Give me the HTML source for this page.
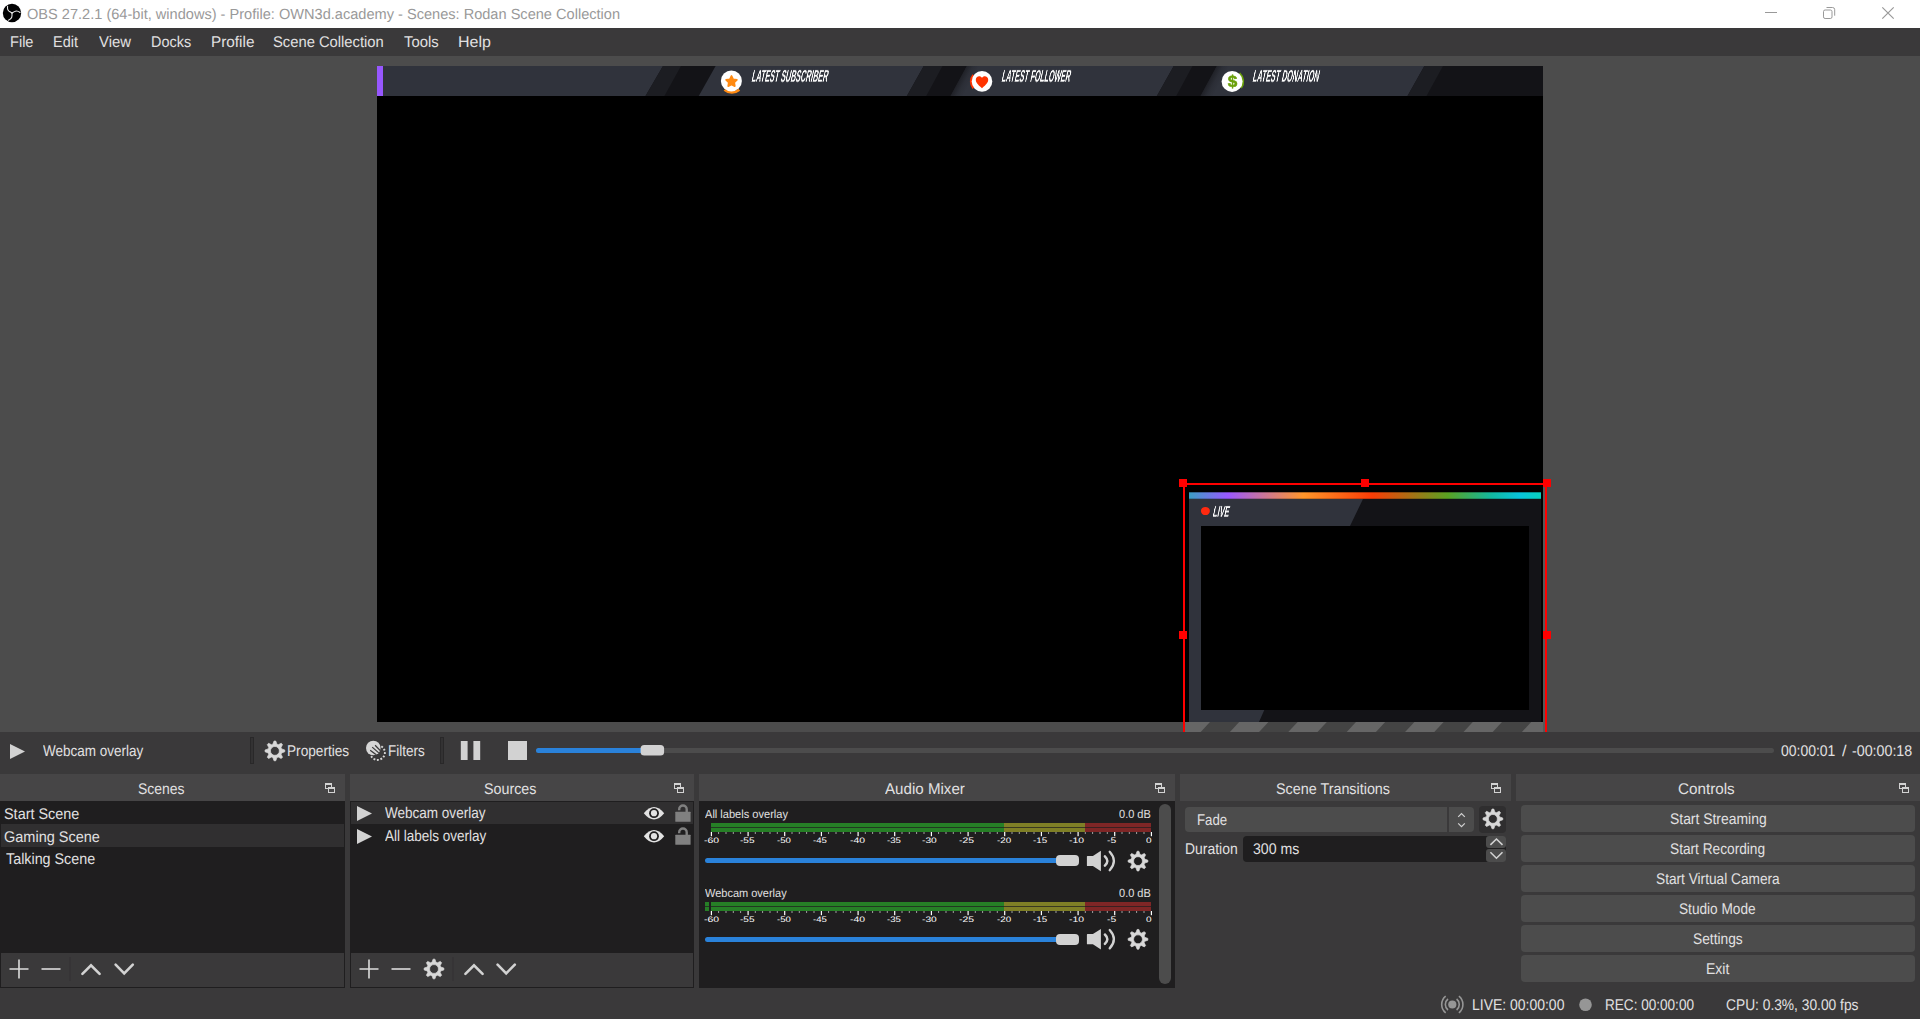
<!DOCTYPE html>
<html><head><meta charset="utf-8"><title>OBS</title>
<style>
html,body{margin:0;padding:0}
body{width:1920px;height:1019px;overflow:hidden;background:#3a393a;position:relative;font-family:"Liberation Sans",sans-serif;text-rendering:geometricPrecision}
.a{position:absolute}
.t{position:absolute;white-space:pre;line-height:20px;height:20px;transform-origin:0 0}
.o{font-weight:bold;color:#fff;transform-origin:0 75%;will-change:transform}
.btn{position:absolute;left:1521px;width:394px;height:27px;background:#4c4c4c;border-radius:4px}
.title{position:absolute;top:774px;height:27px;background:#464546}
.list{position:absolute;top:801px;background:#1f1e1f}
svg{position:absolute;left:0;top:0}
</style></head><body>
<div class="a" style="left:0;top:0;width:1920px;height:28px;background:#fff"></div>
<div class="a" style="left:0;top:28px;width:1920px;height:28px;background:#3a393a"></div>
<div class="a" style="left:0;top:56px;width:1920px;height:676px;background:#4c4c4c"></div>
<div class="a" style="left:377px;top:66px;width:1166px;height:656px;background:#000"></div>
<svg width="1920" height="1019" viewBox="0 0 1920 1019">
<rect x="377" y="66" width="1166" height="30" fill="#30333c"/>
<path d="M663 66L715.6 66L698.75 96L645.5 96Z" fill="#131317"/>
<path d="M663 66L681 66L664.4 96L645.5 96Z" fill="#1c1d22"/>
<path d="M923.75 66L966.9 66L950.6 96L906.9 96Z" fill="#131317"/>
<path d="M923.75 66L942.5 66L926.25 96L906.9 96Z" fill="#1c1d22"/>
<path d="M1173.75 66L1216.9 66L1200.6 96L1156.9 96Z" fill="#131317"/>
<path d="M1173.75 66L1192.5 66L1176.25 96L1156.9 96Z" fill="#1c1d22"/>
<defs><linearGradient id="gl0" gradientUnits="userSpaceOnUse" x1="958.75" y1="81" x2="968.45" y2="86.25"><stop offset="0" stop-color="#131317" stop-opacity="0.55"/><stop offset="0.5" stop-color="#131317" stop-opacity="0.16"/><stop offset="1" stop-color="#131317" stop-opacity="0"/></linearGradient></defs>
<path d="M966.9 66L950.6 96L964 96L980.3 66Z" fill="url(#gl0)"/>
<defs><linearGradient id="gl1" gradientUnits="userSpaceOnUse" x1="1208.75" y1="81" x2="1218.45" y2="86.25"><stop offset="0" stop-color="#131317" stop-opacity="0.55"/><stop offset="0.5" stop-color="#131317" stop-opacity="0.16"/><stop offset="1" stop-color="#131317" stop-opacity="0"/></linearGradient></defs>
<path d="M1216.9 66L1200.6 96L1214 96L1230.3 66Z" fill="url(#gl1)"/>
<path d="M1424.4 66L1543 66L1543 96L1407.5 96Z" fill="#131317"/>
<path d="M1424.4 66L1443 66L1426.5 96L1407.5 96Z" fill="#1c1d22"/>
<rect x="377" y="66" width="6" height="30" fill="#9757ff"/>
<path d="M739.29 89.71A11.5 11.5 0 0 1 724.51 89.71" fill="none" stroke="#ff8a12" stroke-width="2.8"/>
<circle cx="731.4" cy="80.9" r="10.5" fill="#fff"/>
<path d="M731.50 75.90L733.20 79.25L736.92 79.84L734.26 82.50L734.85 86.21L731.50 84.50L728.15 86.21L728.74 82.50L726.08 79.84L729.80 79.25Z" fill="#ff8a12" stroke="#ff8a12" stroke-width="1.6" stroke-linejoin="round"/>
<path d="M973.41 88.31A10.9 10.9 0 0 1 973.41 74.89" fill="none" stroke="#ff3300" stroke-width="2.4"/>
<circle cx="982" cy="81.4" r="10.3" fill="#fff"/>
<path d="M982 88.2C977.6 84.6 975.8 82.4 975.8 79.8C975.8 77.6 977.4 76.2 979.2 76.2C980.4 76.2 981.4 76.8 982 77.8C982.6 76.8 983.6 76.2 984.8 76.2C986.6 76.2 988.2 77.6 988.2 79.8C988.2 82.4 986.4 84.6 982 88.2Z" fill="#ff3300"/>
<path d="M1239.46 73.23A11 11 0 0 1 1241.00 87.87" fill="none" stroke="#6aa00a" stroke-width="2.2"/>
<circle cx="1232.1" cy="81.4" r="10.5" fill="#fff"/>
<defs><linearGradient id="rb" x1="0" x2="1" y1="0" y2="0"><stop offset="0" stop-color="#3a9ec4"/><stop offset="0.11" stop-color="#9a58ff"/><stop offset="0.325" stop-color="#ff962a"/><stop offset="0.52" stop-color="#fa3c06"/><stop offset="0.735" stop-color="#5aa222"/><stop offset="0.86" stop-color="#12b8a0"/><stop offset="0.94" stop-color="#08c4dc"/><stop offset="1" stop-color="#08d0c0"/></linearGradient></defs>
<rect x="1189" y="499" width="352" height="223" fill="#131317"/>
<path d="M1189 499H1363L1350 526H1201V710H1264.3L1259 722H1189Z" fill="#30333c"/>
<rect x="1201" y="526" width="328" height="184" fill="#000"/>
<rect x="1189" y="492.3" width="352" height="6.5" fill="url(#rb)"/>
<ellipse cx="1205.4" cy="511" rx="4.5" ry="4.1" fill="#ff2a10"/>
<clipPath id="hc"><rect x="1185" y="722" width="360" height="10"/></clipPath><g clip-path="url(#hc)"><rect x="1185" y="722" width="360" height="10" fill="#444444"/>
<path d="M1180.8 722L1210.0 722L1200.7 732L1171.5 732Z" fill="#666666"/>
<path d="M1239.2 722L1268.4 722L1259.1 732L1229.9 732Z" fill="#666666"/>
<path d="M1297.6 722L1326.8 722L1317.5 732L1288.3 732Z" fill="#666666"/>
<path d="M1356.0 722L1385.2 722L1375.9 732L1346.7 732Z" fill="#666666"/>
<path d="M1414.4 722L1443.6 722L1434.3 732L1405.1 732Z" fill="#666666"/>
<path d="M1472.8 722L1502.0 722L1492.7 732L1463.5 732Z" fill="#666666"/>
<path d="M1531.2 722L1560.4 722L1551.1 732L1521.9 732Z" fill="#666666"/>
</g>
<rect x="1543" y="485" width="2" height="247" fill="#585858"/>
<path d="M1184 484H1546M1184 484V732M1546 484V732" stroke="#ff0000" stroke-width="2" fill="none"/>
<rect x="1179" y="479" width="8" height="8" fill="#ff0000"/>
<rect x="1361" y="479" width="8" height="8" fill="#ff0000"/>
<rect x="1543" y="479" width="8" height="8" fill="#ff0000"/>
<rect x="1179" y="631" width="8" height="8" fill="#ff0000"/>
<rect x="1543" y="631" width="8" height="8" fill="#ff0000"/>
</svg>
<!-- docks -->
<div class="title" style="left:0;width:345px"></div>
<div class="title" style="left:350px;width:344px"></div>
<div class="title" style="left:699px;width:476px"></div>
<div class="title" style="left:1180px;width:331px"></div>
<div class="title" style="left:1516px;width:404px"></div>
<div class="list" style="left:0;width:345px;height:187px"></div>
<div class="a" style="left:1px;top:953px;width:343px;height:34px;background:#3a393a"></div>
<div class="a" style="left:1px;top:824px;width:343px;height:23px;background:#302f30"></div>
<div class="list" style="left:350px;width:344px;height:187px"></div>
<div class="a" style="left:351px;top:953px;width:342px;height:34px;background:#3a393a"></div>
<div class="a" style="left:351px;top:802px;width:342px;height:22px;background:#302f30"></div>
<div class="list" style="left:699px;width:476px;height:187px"></div>
<div class="a" style="left:1185px;top:807px;width:289px;height:25px;background:#4c4c4c;border-radius:4px"></div>
<div class="a" style="left:1447px;top:807px;width:2px;height:25px;background:#3a393a"></div>
<div class="a" style="left:1479px;top:806px;width:27px;height:27px;background:#2f2e2f;border-radius:4px"></div>
<div class="a" style="left:1243px;top:836px;width:263px;height:26px;background:#1f1e1f;border-radius:4px"></div>
<div class="a" style="left:1486px;top:836px;width:20px;height:12px;background:#4c4c4c;border-radius:3px"></div>
<div class="a" style="left:1486px;top:849px;width:20px;height:13px;background:#4c4c4c;border-radius:3px"></div>
<div class="btn" style="top:805px"></div><div class="btn" style="top:835px"></div><div class="btn" style="top:865px"></div>
<div class="btn" style="top:895px"></div><div class="btn" style="top:925px"></div><div class="btn" style="top:955px"></div>
<svg width="1920" height="1019" viewBox="0 0 1920 1019">
<circle cx="12" cy="13" r="9.2" fill="#020203"/>
<path transform="rotate(0 12 13)" d="M12 13L9.6 11.6C8 10.6 7.1 9 7.6 6.3" stroke="#fff" stroke-width="1.1" fill="none" stroke-linecap="round" opacity="0.92"/>
<path transform="rotate(120 12 13)" d="M12 13L9.6 11.6C8 10.6 7.1 9 7.6 6.3" stroke="#fff" stroke-width="1.1" fill="none" stroke-linecap="round" opacity="0.92"/>
<path transform="rotate(240 12 13)" d="M12 13L9.6 11.6C8 10.6 7.1 9 7.6 6.3" stroke="#fff" stroke-width="1.1" fill="none" stroke-linecap="round" opacity="0.92"/>
<path d="M1765 12.5H1777" stroke="#999" stroke-width="1"/>
<rect x="1823.5" y="10" width="8.5" height="8.5" rx="1.6" fill="none" stroke="#999" stroke-width="1"/>
<path d="M1826.5 7.5H1832.5a2.2 2.2 0 0 1 2.2 2.2V15.7" fill="none" stroke="#999" stroke-width="1"/>
<path d="M1882.3 7.3L1893.7 18.7M1893.7 7.3L1882.3 18.7" stroke="#999" stroke-width="1.2"/>
<path d="M10 744L25 751.5L10 759Z" fill="#d2d2d2"/>
<rect x="250.5" y="737.5" width="3" height="26" fill="#333233" stroke="#292829" stroke-width="1"/><rect x="440.5" y="737.5" width="3" height="26" fill="#333233" stroke="#292829" stroke-width="1"/>
<path fill="#d8d8d8" stroke="#d8d8d8" stroke-width="0.7" stroke-linejoin="round" fill-rule="evenodd" d="M272.89 744.19 L274.01 741.04 L275.79 741.04 L276.91 744.19 L278.22 744.74 L281.24 743.30 L282.50 744.56 L281.06 747.58 L281.61 748.89 L284.76 750.01 L284.76 751.79 L281.61 752.91 L281.06 754.22 L282.50 757.24 L281.24 758.50 L278.22 757.06 L276.91 757.61 L275.79 760.76 L274.01 760.76 L272.89 757.61 L271.58 757.06 L268.56 758.50 L267.30 757.24 L268.74 754.22 L268.19 752.91 L265.04 751.79 L265.04 750.01 L268.19 748.89 L268.74 747.58 L267.30 744.56 L268.56 743.30 L271.58 744.74Z M270.45 750.90 a4.45 4.45 0 1 0 8.9 0 a4.45 4.45 0 1 0 -8.9 0Z"/>
<clipPath id="fc"><circle cx="373.3" cy="748" r="7.3"/></clipPath><circle cx="373.3" cy="748" r="7.3" fill="#d6d6d6"/>
<path clip-path="url(#fc)" d="M375.1 745.3L381 751.3M372.2 747.1L379.6 753.6M370.2 750.2L377.3 755.6" stroke="#3a393a" stroke-width="1.25"/>
<rect x="-0.95" y="-0.95" width="1.9" height="1.9" fill="#d6d6d6" transform="translate(382.09 746.85) rotate(-52)"/>
<rect x="-0.95" y="-0.95" width="1.9" height="1.9" fill="#d6d6d6" transform="translate(384.27 749.63) rotate(-24)"/>
<rect x="-0.95" y="-0.95" width="1.9" height="1.9" fill="#d6d6d6" transform="translate(384.88 753.11) rotate(4)"/>
<rect x="-0.95" y="-0.95" width="1.9" height="1.9" fill="#d6d6d6" transform="translate(383.79 756.47) rotate(32)"/>
<rect x="-0.95" y="-0.95" width="1.9" height="1.9" fill="#d6d6d6" transform="translate(381.25 758.92) rotate(60)"/>
<rect x="-0.95" y="-0.95" width="1.9" height="1.9" fill="#d6d6d6" transform="translate(377.85 759.90) rotate(88)"/>
<rect x="-0.95" y="-0.95" width="1.9" height="1.9" fill="#d6d6d6" transform="translate(374.40 759.16) rotate(116)"/>
<rect x="-0.95" y="-0.95" width="1.9" height="1.9" fill="#d6d6d6" transform="translate(371.69 756.89) rotate(144)"/>
<rect x="460.8" y="741" width="6.8" height="19" fill="#d2d2d2"/><rect x="473.4" y="741" width="6.8" height="19" fill="#d2d2d2"/>
<rect x="508" y="741" width="19" height="19" fill="#d2d2d2"/>
<rect x="536" y="748" width="1238" height="5" rx="2.5" fill="#4c4c4c"/>
<rect x="536" y="748" width="110" height="5" rx="2.5" fill="#2a82da"/>
<rect x="640.6" y="745" width="23.5" height="10.6" rx="3.6" fill="#d2d2d2"/>
<rect x="325.5" y="783.5" width="6" height="5" fill="none" stroke="#d2d2d2" stroke-width="1"/><rect x="325" y="783" width="7" height="2" fill="#d2d2d2"/><rect x="328" y="787" width="7" height="6" fill="#464546"/><rect x="328.5" y="787.5" width="6" height="5" fill="none" stroke="#d2d2d2" stroke-width="1"/><rect x="328" y="787" width="7" height="2" fill="#d2d2d2"/>
<rect x="674.5" y="783.5" width="6" height="5" fill="none" stroke="#d2d2d2" stroke-width="1"/><rect x="674" y="783" width="7" height="2" fill="#d2d2d2"/><rect x="677" y="787" width="7" height="6" fill="#464546"/><rect x="677.5" y="787.5" width="6" height="5" fill="none" stroke="#d2d2d2" stroke-width="1"/><rect x="677" y="787" width="7" height="2" fill="#d2d2d2"/>
<rect x="1155.5" y="783.5" width="6" height="5" fill="none" stroke="#d2d2d2" stroke-width="1"/><rect x="1155" y="783" width="7" height="2" fill="#d2d2d2"/><rect x="1158" y="787" width="7" height="6" fill="#464546"/><rect x="1158.5" y="787.5" width="6" height="5" fill="none" stroke="#d2d2d2" stroke-width="1"/><rect x="1158" y="787" width="7" height="2" fill="#d2d2d2"/>
<rect x="1491.5" y="783.5" width="6" height="5" fill="none" stroke="#d2d2d2" stroke-width="1"/><rect x="1491" y="783" width="7" height="2" fill="#d2d2d2"/><rect x="1494" y="787" width="7" height="6" fill="#464546"/><rect x="1494.5" y="787.5" width="6" height="5" fill="none" stroke="#d2d2d2" stroke-width="1"/><rect x="1494" y="787" width="7" height="2" fill="#d2d2d2"/>
<rect x="1899.5" y="783.5" width="6" height="5" fill="none" stroke="#d2d2d2" stroke-width="1"/><rect x="1899" y="783" width="7" height="2" fill="#d2d2d2"/><rect x="1902" y="787" width="7" height="6" fill="#464546"/><rect x="1902.5" y="787.5" width="6" height="5" fill="none" stroke="#d2d2d2" stroke-width="1"/><rect x="1902" y="787" width="7" height="2" fill="#d2d2d2"/>
<path d="M9.5 969H28.5M19 959.5V978.5" stroke="#dcdcdc" stroke-width="1.6" fill="none"/>
<path d="M41.5 969H60.5" stroke="#dcdcdc" stroke-width="1.6" fill="none"/>
<path d="M82.4 973.9L91 965.3L99.6 973.9" stroke="#d2d2d2" stroke-width="2.6" fill="none" stroke-linecap="round" stroke-linejoin="miter"/>
<path d="M115.60000000000001 964.6999999999999L124.2 973.3L132.8 964.6999999999999" stroke="#d2d2d2" stroke-width="2.6" fill="none" stroke-linecap="round" stroke-linejoin="miter"/>
<rect x="69.5" y="957" width="1" height="24" fill="#323132"/>
<path d="M359.5 969H378.5M369 959.5V978.5" stroke="#dcdcdc" stroke-width="1.6" fill="none"/>
<path d="M391.5 969H410.5" stroke="#dcdcdc" stroke-width="1.6" fill="none"/>
<path fill="#d8d8d8" stroke="#d8d8d8" stroke-width="0.7" stroke-linejoin="round" fill-rule="evenodd" d="M431.99 962.29 L433.11 959.14 L434.89 959.14 L436.01 962.29 L437.32 962.84 L440.34 961.40 L441.60 962.66 L440.16 965.68 L440.71 966.99 L443.86 968.11 L443.86 969.89 L440.71 971.01 L440.16 972.32 L441.60 975.34 L440.34 976.60 L437.32 975.16 L436.01 975.71 L434.89 978.86 L433.11 978.86 L431.99 975.71 L430.68 975.16 L427.66 976.60 L426.40 975.34 L427.84 972.32 L427.29 971.01 L424.14 969.89 L424.14 968.11 L427.29 966.99 L427.84 965.68 L426.40 962.66 L427.66 961.40 L430.68 962.84Z M429.55 969.00 a4.45 4.45 0 1 0 8.9 0 a4.45 4.45 0 1 0 -8.9 0Z"/>
<path d="M465.4 973.9L474 965.3L482.6 973.9" stroke="#d2d2d2" stroke-width="2.6" fill="none" stroke-linecap="round" stroke-linejoin="miter"/>
<path d="M497.59999999999997 964.6999999999999L506.2 973.3L514.8 964.6999999999999" stroke="#d2d2d2" stroke-width="2.6" fill="none" stroke-linecap="round" stroke-linejoin="miter"/>
<rect x="452.5" y="957" width="1" height="24" fill="#323132"/>
<path d="M357 806L372 813.5L357 821Z" fill="#d2d2d2"/>
<path d="M643.8 813.2Q654 800.7 664.2 813.2Q654 825.7 643.8 813.2Z" fill="#e2e2e2"/><circle cx="654" cy="813.2" r="4.9" fill="#1f1e1f"/><circle cx="654" cy="813.2" r="3.1" fill="#e2e2e2"/>
<path d="M679.1999999999999 810.3V809.3a3.75 3.75 0 0 1 7.5 0V813.3" fill="none" stroke="#808080" stroke-width="2.4"/><rect x="675.3" y="811.8" width="15.3" height="10" rx="0.5" fill="#808080"/>
<path d="M357 829L372 836.5L357 844Z" fill="#d2d2d2"/>
<path d="M643.8 836.2Q654 823.7 664.2 836.2Q654 848.7 643.8 836.2Z" fill="#e2e2e2"/><circle cx="654" cy="836.2" r="4.9" fill="#1f1e1f"/><circle cx="654" cy="836.2" r="3.1" fill="#e2e2e2"/>
<path d="M679.1999999999999 833.3V832.3a3.75 3.75 0 0 1 7.5 0V836.3" fill="none" stroke="#808080" stroke-width="2.4"/><rect x="675.3" y="834.8" width="15.3" height="10" rx="0.5" fill="#808080"/>
<rect x="711" y="823" width="293" height="4" fill="#267f26"/><rect x="711" y="828" width="293" height="4" fill="#267f26"/>
<rect x="711" y="827" width="293" height="1" fill="#267f26" opacity="0.28"/>
<rect x="1004" y="823" width="81" height="4" fill="#7f7f26"/><rect x="1004" y="828" width="81" height="4" fill="#7f7f26"/>
<rect x="1004" y="827" width="81" height="1" fill="#7f7f26" opacity="0.28"/>
<rect x="1085" y="823" width="66" height="4" fill="#7f2626"/><rect x="1085" y="828" width="66" height="4" fill="#7f2626"/>
<rect x="1085" y="827" width="66" height="1" fill="#7f2626" opacity="0.28"/>
<rect x="710.8" y="832" width="1.2" height="4.2" fill="#ffffff"/>
<rect x="718.1" y="832" width="1" height="2" fill="#a0a0a0"/>
<rect x="725.5" y="832" width="1" height="2" fill="#a0a0a0"/>
<rect x="732.8" y="832" width="1" height="2" fill="#a0a0a0"/>
<rect x="740.1" y="832" width="1" height="2" fill="#a0a0a0"/>
<rect x="747.5" y="832" width="1.2" height="4.2" fill="#ffffff"/>
<rect x="754.8" y="832" width="1" height="2" fill="#a0a0a0"/>
<rect x="762.1" y="832" width="1" height="2" fill="#a0a0a0"/>
<rect x="769.5" y="832" width="1" height="2" fill="#a0a0a0"/>
<rect x="776.8" y="832" width="1" height="2" fill="#a0a0a0"/>
<rect x="784.1" y="832" width="1.2" height="4.2" fill="#ffffff"/>
<rect x="791.5" y="832" width="1" height="2" fill="#a0a0a0"/>
<rect x="798.8" y="832" width="1" height="2" fill="#a0a0a0"/>
<rect x="806.1" y="832" width="1" height="2" fill="#a0a0a0"/>
<rect x="813.5" y="832" width="1" height="2" fill="#a0a0a0"/>
<rect x="820.8" y="832" width="1.2" height="4.2" fill="#ffffff"/>
<rect x="828.1" y="832" width="1" height="2" fill="#a0a0a0"/>
<rect x="835.5" y="832" width="1" height="2" fill="#a0a0a0"/>
<rect x="842.8" y="832" width="1" height="2" fill="#a0a0a0"/>
<rect x="850.1" y="832" width="1" height="2" fill="#a0a0a0"/>
<rect x="857.5" y="832" width="1.2" height="4.2" fill="#ffffff"/>
<rect x="864.8" y="832" width="1" height="2" fill="#a0a0a0"/>
<rect x="872.1" y="832" width="1" height="2" fill="#a0a0a0"/>
<rect x="879.5" y="832" width="1" height="2" fill="#a0a0a0"/>
<rect x="886.8" y="832" width="1" height="2" fill="#a0a0a0"/>
<rect x="894.1" y="832" width="1.2" height="4.2" fill="#ffffff"/>
<rect x="901.5" y="832" width="1" height="2" fill="#a0a0a0"/>
<rect x="908.8" y="832" width="1" height="2" fill="#a0a0a0"/>
<rect x="916.1" y="832" width="1" height="2" fill="#a0a0a0"/>
<rect x="923.5" y="832" width="1" height="2" fill="#a0a0a0"/>
<rect x="930.8" y="832" width="1.2" height="4.2" fill="#ffffff"/>
<rect x="938.1" y="832" width="1" height="2" fill="#a0a0a0"/>
<rect x="945.5" y="832" width="1" height="2" fill="#a0a0a0"/>
<rect x="952.8" y="832" width="1" height="2" fill="#a0a0a0"/>
<rect x="960.1" y="832" width="1" height="2" fill="#a0a0a0"/>
<rect x="967.5" y="832" width="1.2" height="4.2" fill="#ffffff"/>
<rect x="974.8" y="832" width="1" height="2" fill="#a0a0a0"/>
<rect x="982.1" y="832" width="1" height="2" fill="#a0a0a0"/>
<rect x="989.5" y="832" width="1" height="2" fill="#a0a0a0"/>
<rect x="996.8" y="832" width="1" height="2" fill="#a0a0a0"/>
<rect x="1004.1" y="832" width="1.2" height="4.2" fill="#ffffff"/>
<rect x="1011.5" y="832" width="1" height="2" fill="#a0a0a0"/>
<rect x="1018.8" y="832" width="1" height="2" fill="#a0a0a0"/>
<rect x="1026.1" y="832" width="1" height="2" fill="#a0a0a0"/>
<rect x="1033.5" y="832" width="1" height="2" fill="#a0a0a0"/>
<rect x="1040.8" y="832" width="1.2" height="4.2" fill="#ffffff"/>
<rect x="1048.1" y="832" width="1" height="2" fill="#a0a0a0"/>
<rect x="1055.5" y="832" width="1" height="2" fill="#a0a0a0"/>
<rect x="1062.8" y="832" width="1" height="2" fill="#a0a0a0"/>
<rect x="1070.1" y="832" width="1" height="2" fill="#a0a0a0"/>
<rect x="1077.5" y="832" width="1.2" height="4.2" fill="#ffffff"/>
<rect x="1084.8" y="832" width="1" height="2" fill="#a0a0a0"/>
<rect x="1092.1" y="832" width="1" height="2" fill="#a0a0a0"/>
<rect x="1099.5" y="832" width="1" height="2" fill="#a0a0a0"/>
<rect x="1106.8" y="832" width="1" height="2" fill="#a0a0a0"/>
<rect x="1114.1" y="832" width="1.2" height="4.2" fill="#ffffff"/>
<rect x="1121.5" y="832" width="1" height="2" fill="#a0a0a0"/>
<rect x="1128.8" y="832" width="1" height="2" fill="#a0a0a0"/>
<rect x="1136.1" y="832" width="1" height="2" fill="#a0a0a0"/>
<rect x="1143.5" y="832" width="1" height="2" fill="#a0a0a0"/>
<rect x="1150.8" y="832" width="1.2" height="4.2" fill="#ffffff"/>
<rect x="705" y="858" width="360" height="5" rx="2.5" fill="#2a82da"/>
<rect x="1056" y="855" width="23" height="11" rx="4" fill="#d2d2d2"/>
<path d="M1087.5 855.9H1092.9L1100.9 850.8V871.2L1092.9 866.1H1087.5a0.6 0.6 0 0 1 -0.6 -0.6V856.5a0.6 0.6 0 0 1 0.6 -0.6Z" fill="#d2d2d2"/><path d="M1104.9 856.3Q1109.8000000000002 861.0 1104.9 865.7" stroke="#d2d2d2" stroke-width="2.5" fill="none" stroke-linecap="round"/><path d="M1109.7 851.8Q1118.1000000000001 861.0 1109.7 870.2" stroke="#d2d2d2" stroke-width="2.3" fill="none" stroke-linecap="round"/>
<path fill="#d8d8d8" stroke="#d8d8d8" stroke-width="0.7" stroke-linejoin="round" fill-rule="evenodd" d="M1135.99 854.39 L1137.11 851.24 L1138.89 851.24 L1140.01 854.39 L1141.32 854.94 L1144.34 853.50 L1145.60 854.76 L1144.16 857.78 L1144.71 859.09 L1147.86 860.21 L1147.86 861.99 L1144.71 863.11 L1144.16 864.42 L1145.60 867.44 L1144.34 868.70 L1141.32 867.26 L1140.01 867.81 L1138.89 870.96 L1137.11 870.96 L1135.99 867.81 L1134.68 867.26 L1131.66 868.70 L1130.40 867.44 L1131.84 864.42 L1131.29 863.11 L1128.14 861.99 L1128.14 860.21 L1131.29 859.09 L1131.84 857.78 L1130.40 854.76 L1131.66 853.50 L1134.68 854.94Z M1133.55 861.10 a4.45 4.45 0 1 0 8.9 0 a4.45 4.45 0 1 0 -8.9 0Z"/>
<rect x="711" y="902" width="293" height="4" fill="#267f26"/><rect x="711" y="907" width="293" height="4" fill="#267f26"/>
<rect x="711" y="906" width="293" height="1" fill="#267f26" opacity="0.28"/>
<rect x="1004" y="902" width="81" height="4" fill="#7f7f26"/><rect x="1004" y="907" width="81" height="4" fill="#7f7f26"/>
<rect x="1004" y="906" width="81" height="1" fill="#7f7f26" opacity="0.28"/>
<rect x="1085" y="902" width="66" height="4" fill="#7f2626"/><rect x="1085" y="907" width="66" height="4" fill="#7f2626"/>
<rect x="1085" y="906" width="66" height="1" fill="#7f2626" opacity="0.28"/>
<rect x="710.8" y="911" width="1.2" height="4.2" fill="#ffffff"/>
<rect x="718.1" y="911" width="1" height="2" fill="#a0a0a0"/>
<rect x="725.5" y="911" width="1" height="2" fill="#a0a0a0"/>
<rect x="732.8" y="911" width="1" height="2" fill="#a0a0a0"/>
<rect x="740.1" y="911" width="1" height="2" fill="#a0a0a0"/>
<rect x="747.5" y="911" width="1.2" height="4.2" fill="#ffffff"/>
<rect x="754.8" y="911" width="1" height="2" fill="#a0a0a0"/>
<rect x="762.1" y="911" width="1" height="2" fill="#a0a0a0"/>
<rect x="769.5" y="911" width="1" height="2" fill="#a0a0a0"/>
<rect x="776.8" y="911" width="1" height="2" fill="#a0a0a0"/>
<rect x="784.1" y="911" width="1.2" height="4.2" fill="#ffffff"/>
<rect x="791.5" y="911" width="1" height="2" fill="#a0a0a0"/>
<rect x="798.8" y="911" width="1" height="2" fill="#a0a0a0"/>
<rect x="806.1" y="911" width="1" height="2" fill="#a0a0a0"/>
<rect x="813.5" y="911" width="1" height="2" fill="#a0a0a0"/>
<rect x="820.8" y="911" width="1.2" height="4.2" fill="#ffffff"/>
<rect x="828.1" y="911" width="1" height="2" fill="#a0a0a0"/>
<rect x="835.5" y="911" width="1" height="2" fill="#a0a0a0"/>
<rect x="842.8" y="911" width="1" height="2" fill="#a0a0a0"/>
<rect x="850.1" y="911" width="1" height="2" fill="#a0a0a0"/>
<rect x="857.5" y="911" width="1.2" height="4.2" fill="#ffffff"/>
<rect x="864.8" y="911" width="1" height="2" fill="#a0a0a0"/>
<rect x="872.1" y="911" width="1" height="2" fill="#a0a0a0"/>
<rect x="879.5" y="911" width="1" height="2" fill="#a0a0a0"/>
<rect x="886.8" y="911" width="1" height="2" fill="#a0a0a0"/>
<rect x="894.1" y="911" width="1.2" height="4.2" fill="#ffffff"/>
<rect x="901.5" y="911" width="1" height="2" fill="#a0a0a0"/>
<rect x="908.8" y="911" width="1" height="2" fill="#a0a0a0"/>
<rect x="916.1" y="911" width="1" height="2" fill="#a0a0a0"/>
<rect x="923.5" y="911" width="1" height="2" fill="#a0a0a0"/>
<rect x="930.8" y="911" width="1.2" height="4.2" fill="#ffffff"/>
<rect x="938.1" y="911" width="1" height="2" fill="#a0a0a0"/>
<rect x="945.5" y="911" width="1" height="2" fill="#a0a0a0"/>
<rect x="952.8" y="911" width="1" height="2" fill="#a0a0a0"/>
<rect x="960.1" y="911" width="1" height="2" fill="#a0a0a0"/>
<rect x="967.5" y="911" width="1.2" height="4.2" fill="#ffffff"/>
<rect x="974.8" y="911" width="1" height="2" fill="#a0a0a0"/>
<rect x="982.1" y="911" width="1" height="2" fill="#a0a0a0"/>
<rect x="989.5" y="911" width="1" height="2" fill="#a0a0a0"/>
<rect x="996.8" y="911" width="1" height="2" fill="#a0a0a0"/>
<rect x="1004.1" y="911" width="1.2" height="4.2" fill="#ffffff"/>
<rect x="1011.5" y="911" width="1" height="2" fill="#a0a0a0"/>
<rect x="1018.8" y="911" width="1" height="2" fill="#a0a0a0"/>
<rect x="1026.1" y="911" width="1" height="2" fill="#a0a0a0"/>
<rect x="1033.5" y="911" width="1" height="2" fill="#a0a0a0"/>
<rect x="1040.8" y="911" width="1.2" height="4.2" fill="#ffffff"/>
<rect x="1048.1" y="911" width="1" height="2" fill="#a0a0a0"/>
<rect x="1055.5" y="911" width="1" height="2" fill="#a0a0a0"/>
<rect x="1062.8" y="911" width="1" height="2" fill="#a0a0a0"/>
<rect x="1070.1" y="911" width="1" height="2" fill="#a0a0a0"/>
<rect x="1077.5" y="911" width="1.2" height="4.2" fill="#ffffff"/>
<rect x="1084.8" y="911" width="1" height="2" fill="#a0a0a0"/>
<rect x="1092.1" y="911" width="1" height="2" fill="#a0a0a0"/>
<rect x="1099.5" y="911" width="1" height="2" fill="#a0a0a0"/>
<rect x="1106.8" y="911" width="1" height="2" fill="#a0a0a0"/>
<rect x="1114.1" y="911" width="1.2" height="4.2" fill="#ffffff"/>
<rect x="1121.5" y="911" width="1" height="2" fill="#a0a0a0"/>
<rect x="1128.8" y="911" width="1" height="2" fill="#a0a0a0"/>
<rect x="1136.1" y="911" width="1" height="2" fill="#a0a0a0"/>
<rect x="1143.5" y="911" width="1" height="2" fill="#a0a0a0"/>
<rect x="1150.8" y="911" width="1.2" height="4.2" fill="#ffffff"/>
<rect x="705" y="937" width="360" height="5" rx="2.5" fill="#2a82da"/>
<rect x="1056" y="934" width="23" height="11" rx="4" fill="#d2d2d2"/>
<path d="M1087.5 934.1H1092.9L1100.9 929.0V949.4000000000001L1092.9 944.3000000000001H1087.5a0.6 0.6 0 0 1 -0.6 -0.6V934.7a0.6 0.6 0 0 1 0.6 -0.6Z" fill="#d2d2d2"/><path d="M1104.9 934.5Q1109.8000000000002 939.2 1104.9 943.9000000000001" stroke="#d2d2d2" stroke-width="2.5" fill="none" stroke-linecap="round"/><path d="M1109.7 930.0Q1118.1000000000001 939.2 1109.7 948.4000000000001" stroke="#d2d2d2" stroke-width="2.3" fill="none" stroke-linecap="round"/>
<path fill="#d8d8d8" stroke="#d8d8d8" stroke-width="0.7" stroke-linejoin="round" fill-rule="evenodd" d="M1135.99 932.59 L1137.11 929.44 L1138.89 929.44 L1140.01 932.59 L1141.32 933.14 L1144.34 931.70 L1145.60 932.96 L1144.16 935.98 L1144.71 937.29 L1147.86 938.41 L1147.86 940.19 L1144.71 941.31 L1144.16 942.62 L1145.60 945.64 L1144.34 946.90 L1141.32 945.46 L1140.01 946.01 L1138.89 949.16 L1137.11 949.16 L1135.99 946.01 L1134.68 945.46 L1131.66 946.90 L1130.40 945.64 L1131.84 942.62 L1131.29 941.31 L1128.14 940.19 L1128.14 938.41 L1131.29 937.29 L1131.84 935.98 L1130.40 932.96 L1131.66 931.70 L1134.68 933.14Z M1133.55 939.30 a4.45 4.45 0 1 0 8.9 0 a4.45 4.45 0 1 0 -8.9 0Z"/>
<rect x="705" y="902" width="4" height="4" fill="#267f26"/><rect x="705" y="907" width="4" height="4" fill="#267f26"/><rect x="705" y="906" width="4" height="1" fill="#267f26" opacity="0.28"/>
<rect x="1159" y="804" width="12" height="180" rx="6" fill="#4c4c4c"/>
<path d="M1458.2 816.9L1461.5 813.5L1464.8 816.9M1458.2 823.3L1461.5 826.7L1464.8 823.3" stroke="#d2d2d2" stroke-width="1.2" fill="none"/>
<path fill="#d8d8d8" stroke="#d8d8d8" stroke-width="0.7" stroke-linejoin="round" fill-rule="evenodd" d="M1490.89 812.19 L1492.01 809.04 L1493.79 809.04 L1494.91 812.19 L1496.22 812.74 L1499.24 811.30 L1500.50 812.56 L1499.06 815.58 L1499.61 816.89 L1502.76 818.01 L1502.76 819.79 L1499.61 820.91 L1499.06 822.22 L1500.50 825.24 L1499.24 826.50 L1496.22 825.06 L1494.91 825.61 L1493.79 828.76 L1492.01 828.76 L1490.89 825.61 L1489.58 825.06 L1486.56 826.50 L1485.30 825.24 L1486.74 822.22 L1486.19 820.91 L1483.04 819.79 L1483.04 818.01 L1486.19 816.89 L1486.74 815.58 L1485.30 812.56 L1486.56 811.30 L1489.58 812.74Z M1488.45 818.90 a4.45 4.45 0 1 0 8.9 0 a4.45 4.45 0 1 0 -8.9 0Z"/>
<path d="M1490.4 844.9L1496.45 839L1502.5 844.9" stroke="#d2d2d2" stroke-width="1.6" fill="none"/>
<path d="M1490.4 852.3L1496.45 858.2L1502.5 852.3" stroke="#d2d2d2" stroke-width="1.6" fill="none"/>
<circle cx="1585.5" cy="1004.8" r="6.3" fill="#969696"/>
<circle cx="1452.3" cy="1004.5" r="4.1" fill="#969696"/>
<path d="M1448.0 999.0A7 7 0 0 0 1448.0 1010.0M1456.6 999.0A7 7 0 0 1 1456.6 1010.0" stroke="#969696" stroke-width="1.6" fill="none"/>
<path d="M1445.7 996.2A10.6 10.6 0 0 0 1445.7 1012.8M1458.9 996.2A10.6 10.6 0 0 1 1458.9 1012.8" stroke="#969696" stroke-width="1.6" fill="none"/>
</svg>
<span class="t" style="left:26.51px;top:5px;font-size:14.7px;color:#999999;transform:scaleX(0.9924)">OBS 27.2.1 (64-bit, windows) - Profile: OWN3d.academy - Scenes: Rodan Scene Collection</span>
<span class="t" style="left:9.66px;top:33px;font-size:15.5px;color:#e1e0e1;transform:scaleX(0.9391)">File</span>
<span class="t" style="left:52.82px;top:33px;font-size:15.5px;color:#e1e0e1;transform:scaleX(0.9327)">Edit</span>
<span class="t" style="left:99.40px;top:33px;font-size:15.5px;color:#e1e0e1;transform:scaleX(0.9576)">View</span>
<span class="t" style="left:150.97px;top:33px;font-size:15.5px;color:#e1e0e1;transform:scaleX(0.9310)">Docks</span>
<span class="t" style="left:211.01px;top:33px;font-size:15.5px;color:#e1e0e1;transform:scaleX(0.9881)">Profile</span>
<span class="t" style="left:273.05px;top:33px;font-size:15.5px;color:#e1e0e1;transform:scaleX(0.9522)">Scene Collection</span>
<span class="t" style="left:404.00px;top:33px;font-size:15.5px;color:#e1e0e1;transform:scaleX(0.9583)">Tools</span>
<span class="t" style="left:457.97px;top:33px;font-size:15.5px;color:#e1e0e1;transform:scaleX(1.0333)">Help</span>
<span class="t" style="left:43.00px;top:742px;font-size:15.5px;color:#e1e0e1;transform:scaleX(0.8696)">Webcam overlay</span>
<span class="t" style="left:286.62px;top:742px;font-size:15.5px;color:#e1e0e1;transform:scaleX(0.8804)">Properties</span>
<span class="t" style="left:388.38px;top:742px;font-size:15.5px;color:#e1e0e1;transform:scaleX(0.8720)">Filters</span>
<span class="t" style="left:1781.40px;top:742px;font-size:15.5px;color:#e1e0e1;transform:scaleX(0.9000)">00:00:01</span>
<span class="t" style="left:1842.30px;top:742px;font-size:15.5px;color:#e1e0e1;transform:scaleX(1.0500)">/</span>
<span class="t" style="left:1852.28px;top:742px;font-size:15.5px;color:#e1e0e1;transform:scaleX(0.9187)">-00:00:18</span>
<span class="t" style="left:137.50px;top:780px;font-size:15.5px;color:#e1e0e1;transform:scaleX(0.9000)">Scenes</span>
<span class="t" style="left:483.83px;top:780px;font-size:15.5px;color:#e1e0e1;transform:scaleX(0.9209)">Sources</span>
<span class="t" style="left:885.30px;top:780px;font-size:15.5px;color:#e1e0e1;transform:scaleX(0.9756)">Audio Mixer</span>
<span class="t" style="left:1276.47px;top:780px;font-size:15.5px;color:#e1e0e1;transform:scaleX(0.9254)">Scene Transitions</span>
<span class="t" style="left:1677.82px;top:780px;font-size:15.5px;color:#e1e0e1;transform:scaleX(0.9821)">Controls</span>
<span class="t" style="left:4.32px;top:805px;font-size:15.5px;color:#e1e0e1;transform:scaleX(0.9304)">Start Scene</span>
<span class="t" style="left:4.31px;top:828px;font-size:15.5px;color:#e1e0e1;transform:scaleX(0.9356)">Gaming Scene</span>
<span class="t" style="left:5.60px;top:850px;font-size:15.5px;color:#e1e0e1;transform:scaleX(0.9240)">Talking Scene</span>
<span class="t" style="left:385.00px;top:804px;font-size:15.5px;color:#e1e0e1;transform:scaleX(0.8722)">Webcam overlay</span>
<span class="t" style="left:385.00px;top:827px;font-size:15.5px;color:#e1e0e1;transform:scaleX(0.8707)">All labels overlay</span>
<span class="t" style="left:705.00px;top:804px;font-size:11.8px;color:#e1e0e1;transform:scaleX(0.9375)">All labels overlay</span>
<span class="t" style="left:1119.00px;top:804px;font-size:11.8px;color:#e1e0e1;transform:scaleX(0.9338)">0.0 dB</span>
<span class="t" style="left:705.00px;top:883px;font-size:11.8px;color:#e1e0e1;transform:scaleX(0.9318)">Webcam overlay</span>
<span class="t" style="left:1119.00px;top:883px;font-size:11.8px;color:#e1e0e1;transform:scaleX(0.9338)">0.0 dB</span>
<span class="t" style="left:1196.90px;top:811px;font-size:15.5px;color:#e1e0e1;transform:scaleX(0.8544)">Fade</span>
<span class="t" style="left:1184.50px;top:840px;font-size:15.5px;color:#e1e0e1;transform:scaleX(0.8982)">Duration</span>
<span class="t" style="left:1252.89px;top:840px;font-size:15.5px;color:#e1e0e1;transform:scaleX(0.9102)">300 ms</span>
<span class="t" style="left:1669.60px;top:810px;font-size:15.5px;color:#e1e0e1;transform:scaleX(0.8972)">Start Streaming</span>
<span class="t" style="left:1670.12px;top:840px;font-size:15.5px;color:#e1e0e1;transform:scaleX(0.8830)">Start Recording</span>
<span class="t" style="left:1655.72px;top:870px;font-size:15.5px;color:#e1e0e1;transform:scaleX(0.8827)">Start Virtual Camera</span>
<span class="t" style="left:1679.42px;top:900px;font-size:15.5px;color:#e1e0e1;transform:scaleX(0.8802)">Studio Mode</span>
<span class="t" style="left:1692.86px;top:930px;font-size:15.5px;color:#e1e0e1;transform:scaleX(0.8882)">Settings</span>
<span class="t" style="left:1706.30px;top:960px;font-size:15.5px;color:#e1e0e1;transform:scaleX(0.9000)">Exit</span>
<span class="t" style="left:1472.10px;top:996px;font-size:15.5px;color:#e1e0e1;transform:scaleX(0.9010)">LIVE: 00:00:00</span>
<span class="t" style="left:1604.62px;top:996px;font-size:15.5px;color:#e1e0e1;transform:scaleX(0.8750)">REC: 00:00:00</span>
<span class="t" style="left:1725.61px;top:996px;font-size:15.5px;color:#e1e0e1;transform:scaleX(0.8885)">CPU: 0.3%, 30.00 fps</span>
<span class="t" style="left:703.70px;top:831px;font-size:8px;color:#ffffff;transform:scaleX(1.3000)">-60</span>
<span class="t" style="left:740.00px;top:831px;font-size:8px;color:#ffffff;transform:scaleX(1.2500)">-55</span>
<span class="t" style="left:776.80px;top:831px;font-size:8px;color:#ffffff;transform:scaleX(1.2000)">-50</span>
<span class="t" style="left:812.80px;top:831px;font-size:8px;color:#ffffff;transform:scaleX(1.2000)">-45</span>
<span class="t" style="left:849.70px;top:831px;font-size:8px;color:#ffffff;transform:scaleX(1.3000)">-40</span>
<span class="t" style="left:886.80px;top:831px;font-size:8px;color:#ffffff;transform:scaleX(1.2000)">-35</span>
<span class="t" style="left:922.48px;top:831px;font-size:8px;color:#ffffff;transform:scaleX(1.2750)">-30</span>
<span class="t" style="left:958.70px;top:831px;font-size:8px;color:#ffffff;transform:scaleX(1.3000)">-25</span>
<span class="t" style="left:996.52px;top:831px;font-size:8px;color:#ffffff;transform:scaleX(1.2250)">-20</span>
<span class="t" style="left:1032.78px;top:831px;font-size:8px;color:#ffffff;transform:scaleX(1.2250)">-15</span>
<span class="t" style="left:1068.70px;top:831px;font-size:8px;color:#ffffff;transform:scaleX(1.3000)">-10</span>
<span class="t" style="left:1107.46px;top:831px;font-size:8px;color:#ffffff;transform:scaleX(1.2917)">-5</span>
<span class="t" style="left:1146.00px;top:831px;font-size:8px;color:#ffffff;transform:scaleX(1.2500)">0</span>
<span class="t" style="left:703.70px;top:910px;font-size:8px;color:#ffffff;transform:scaleX(1.3000)">-60</span>
<span class="t" style="left:740.00px;top:910px;font-size:8px;color:#ffffff;transform:scaleX(1.2500)">-55</span>
<span class="t" style="left:776.80px;top:910px;font-size:8px;color:#ffffff;transform:scaleX(1.2000)">-50</span>
<span class="t" style="left:812.80px;top:910px;font-size:8px;color:#ffffff;transform:scaleX(1.2000)">-45</span>
<span class="t" style="left:849.70px;top:910px;font-size:8px;color:#ffffff;transform:scaleX(1.3000)">-40</span>
<span class="t" style="left:886.80px;top:910px;font-size:8px;color:#ffffff;transform:scaleX(1.2000)">-35</span>
<span class="t" style="left:922.48px;top:910px;font-size:8px;color:#ffffff;transform:scaleX(1.2750)">-30</span>
<span class="t" style="left:958.70px;top:910px;font-size:8px;color:#ffffff;transform:scaleX(1.3000)">-25</span>
<span class="t" style="left:996.52px;top:910px;font-size:8px;color:#ffffff;transform:scaleX(1.2250)">-20</span>
<span class="t" style="left:1032.78px;top:910px;font-size:8px;color:#ffffff;transform:scaleX(1.2250)">-15</span>
<span class="t" style="left:1068.70px;top:910px;font-size:8px;color:#ffffff;transform:scaleX(1.3000)">-10</span>
<span class="t" style="left:1107.46px;top:910px;font-size:8px;color:#ffffff;transform:scaleX(1.2917)">-5</span>
<span class="t" style="left:1146.00px;top:910px;font-size:8px;color:#ffffff;transform:scaleX(1.2500)">0</span>
<span class="t o" style="left:750.83px;top:67px;font-size:16.8px;transform:skewX(-12deg) scaleX(0.4239)">LATEST SUBSCRIBER</span>
<span class="t o" style="left:1000.83px;top:67px;font-size:16.8px;transform:skewX(-12deg) scaleX(0.4169)">LATEST FOLLOWER</span>
<span class="t o" style="left:1252.08px;top:67px;font-size:16.8px;transform:skewX(-12deg) scaleX(0.4223)">LATEST DONATION</span>
<span class="t o" style="left:1212.28px;top:503px;font-size:15.4px;transform:skewX(-12deg) scaleX(0.4727)">LIVE</span>
<span class="t" style="left:1227.6px;top:71.6px;font-size:16.5px;font-weight:bold;color:#6aa00a;-webkit-text-stroke:0.5px #6aa00a;transform:scaleX(1.04);transform-origin:50% 50%;will-change:transform">$</span>
</body></html>
